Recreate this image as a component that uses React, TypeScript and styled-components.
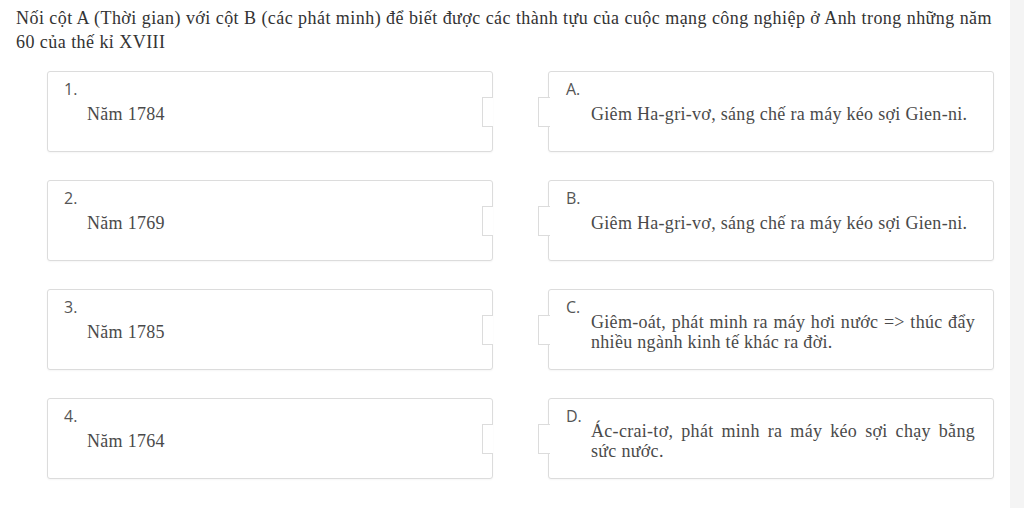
import React from 'react';
import styled, { createGlobalStyle } from 'styled-components';

type TPair = { key: string; label: string; text: string };

const leftItems: TPair[] = [
  { key: 'l1', label: '1.', text: 'Năm 1784' },
  { key: 'l2', label: '2.', text: 'Năm 1769' },
  { key: 'l3', label: '3.', text: 'Năm 1785' },
  { key: 'l4', label: '4.', text: 'Năm 1764' },
];

const rightItems: TPair[] = [
  { key: 'rA', label: 'A.', text: 'Giêm Ha-gri-vơ, sáng chế ra máy kéo sợi Gien-ni.' },
  { key: 'rB', label: 'B.', text: 'Giêm Ha-gri-vơ, sáng chế ra máy kéo sợi Gien-ni.' },
  { key: 'rC', label: 'C.', text: 'Giêm-oát, phát minh ra máy hơi nước => thúc đẩy nhiều ngành kinh tế khác ra đời.' },
  { key: 'rD', label: 'D.', text: 'Ác-crai-tơ, phát minh ra máy kéo sợi chạy bằng sức nước.' },
];

const GlobalStyle = createGlobalStyle`
  html, body {
    margin: 0;
    padding: 0;
    background: #fff;
  }
  body {
    font-family: "Liberation Serif", "Times New Roman", serif;
    color: #333;
  }
`;

export default function App() {
  return (
    <>
      <GlobalStyle />
      <StyledPage>
        <StyledMain>
          <StyledQuestion>
            Nối cột A (Thời gian) với cột B (các phát minh) để biết được các thành tựu của cuộc mạng công nghiệp ở Anh trong những năm
            <br />
            60 của thế kỉ XVIII
          </StyledQuestion>

          {/* MATCHING GRID */}
          <StyledGrid>
            {leftItems.map((left, i) => {
              const right = rightItems[i];
              return (
                <React.Fragment key={left.key}>
                  <StyledCard side="left">
                    <StyledLabel>{left.label}</StyledLabel>
                    <StyledText>{left.text}</StyledText>
                    <StyledNotch side="left" />
                  </StyledCard>
                  <StyledCard side="right">
                    <StyledLabel>{right.label}</StyledLabel>
                    <StyledText justify>{right.text}</StyledText>
                    <StyledNotch side="right" />
                  </StyledCard>
                </React.Fragment>
              );
            })}
          </StyledGrid>
        </StyledMain>
        <StyledScrollTrack />
      </StyledPage>
    </>
  );
}

const StyledPage = styled.div`
  display: flex;
  width: 100%;
  min-height: 100vh;
`;

const StyledMain = styled.div`
  flex: 1;
  padding: 6px 16px 0 16px;
`;

const StyledScrollTrack = styled.div`
  width: 14px;
  flex-shrink: 0;
  background: #f4f4f4;
`;

const StyledQuestion = styled.div`
  font-size: 18px;
  line-height: 24px;
  letter-spacing: 0.45px;
  color: #333;
  white-space: nowrap;
`;

const StyledGrid = styled.div`
  display: grid;
  grid-template-columns: 446px 446px;
  column-gap: 55px;
  row-gap: 28px;
  margin: 17px 0 0 31px;
`;

const StyledCard = styled.div<{ side: 'left' | 'right' }>`
  position: relative;
  box-sizing: border-box;
  height: 81px;
  display: grid;
  grid-template-columns: ${({ side }) => (side === 'left' ? '23px' : '25px')} 1fr;
  padding: 8px 18px 3px ${({ side }) => (side === 'left' ? '16px' : '17px')};
  background: #fff;
  border: 1px solid #dcdcdc;
  border-radius: 3px;
  box-shadow: 0 1px 2px rgba(0, 0, 0, 0.04);
`;

const StyledLabel = styled.div`
  grid-column: 1 / 3;
  grid-row: 1;
  align-self: start;
  font-family: "Open Sans", "Liberation Sans", sans-serif;
  font-size: 16px;
  line-height: 18px;
  color: #555;
`;

const StyledText = styled.div<{ justify?: boolean }>`
  grid-column: 2;
  grid-row: 1;
  align-self: center;
  font-size: 18px;
  line-height: 20px;
  letter-spacing: 0.3px;
  color: #4a4a4a;
  text-align: ${({ justify }) => (justify ? 'justify' : 'left')};
`;

// puzzle tab: cut into the left card, sticking out of the right card
const StyledNotch = styled.span<{ side: 'left' | 'right' }>`
  position: absolute;
  top: 25px;
  width: 10px;
  height: 28px;
  background: #fff;
  border: 1px solid #dcdcdc;
  ${({ side }) =>
    side === 'left'
      ? `right: -1px; border-right: none;`
      : `left: -11px; border-right: none; width: 11px;`}
`;
